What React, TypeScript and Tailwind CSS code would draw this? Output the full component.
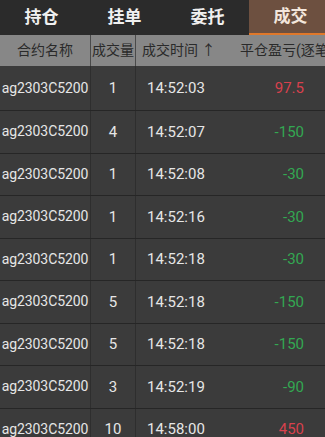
const tabs = ["持仓", "挂单", "委托", "成交"];

const rows = [
    { name: "ag2303C5200", qty: "1", time: "14:52:03", pnl: "97.5" },
    { name: "ag2303C5200", qty: "4", time: "14:52:07", pnl: "-150" },
    { name: "ag2303C5200", qty: "1", time: "14:52:08", pnl: "-30" },
    { name: "ag2303C5200", qty: "1", time: "14:52:16", pnl: "-30" },
    { name: "ag2303C5200", qty: "1", time: "14:52:18", pnl: "-30" },
    { name: "ag2303C5200", qty: "5", time: "14:52:18", pnl: "-150" },
    { name: "ag2303C5200", qty: "5", time: "14:52:18", pnl: "-150" },
    { name: "ag2303C5200", qty: "3", time: "14:52:19", pnl: "-90" },
    { name: "ag2303C5200", qty: "10", time: "14:58:00", pnl: "450" },
];

export default function App() {
    return (
        <div
            className="h-[437px] w-[325px] overflow-hidden bg-[#3b3b3b]"
            style={{ fontFamily: 'Roboto, "Noto Sans CJK SC", sans-serif' }}
        >
            {/* Tabs */}
            <div className="flex h-[35px] w-[332px] bg-[#2b2b2b]">
                {tabs.map((t, i) => (
                    <div
                        key={t}
                        className={
                            i === 3
                                ? "flex w-[83px] items-center justify-center border-b-2 border-[#e0782a] bg-[#6d5040] text-[17px] font-bold text-[#f3e6dc]"
                                : "flex w-[83px] items-center justify-center text-[17px] font-bold text-[#f0f0f0]"
                        }
                    >
                        {t}
                    </div>
                ))}
            </div>

            {/* Header */}
            <div className="flex h-[31px] w-[325px] bg-[#878787] text-[14px] text-[#2a2a2a]">
                <div className="flex w-[90px] items-center justify-center">合约名称</div>
                <div className="flex w-[46px] items-center justify-center border-x border-[#4a4a4a] whitespace-nowrap">
                    成交量
                </div>
                <div className="flex w-[92px] items-center pl-[6px] whitespace-nowrap">成交时间 ↑</div>
                <div className="flex min-w-0 flex-1 items-center pl-[12px] whitespace-nowrap">平仓盈亏(逐笔)</div>
            </div>

            {/* Rows */}
            <div className="flex w-[325px] flex-col">
                {rows.map((r, i) => (
                    <div
                        key={i}
                        className={
                            (i === 0 ? "h-[45px] " : "h-[42.5px] ") +
                            "flex border-b border-[#262626] text-[15px] text-[#e6e6e6]"
                        }
                    >
                        <div className="flex w-[90px] items-center justify-center text-[14px] tracking-[-0.1px] whitespace-nowrap">
                            {r.name}
                        </div>
                        <div className="flex w-[46px] items-center justify-center border-x border-[#2e2e2e]">
                            {r.qty}
                        </div>
                        <div className="flex w-[92px] items-center pl-[11px]">{r.time}</div>
                        <div
                            className={
                                "flex flex-1 items-center justify-end pr-[21px] " +
                                (r.pnl.startsWith("-") ? "text-[#33a852]" : "text-[#d8414d]")
                            }
                        >
                            {r.pnl}
                        </div>
                    </div>
                ))}
            </div>
        </div>
    );
}
